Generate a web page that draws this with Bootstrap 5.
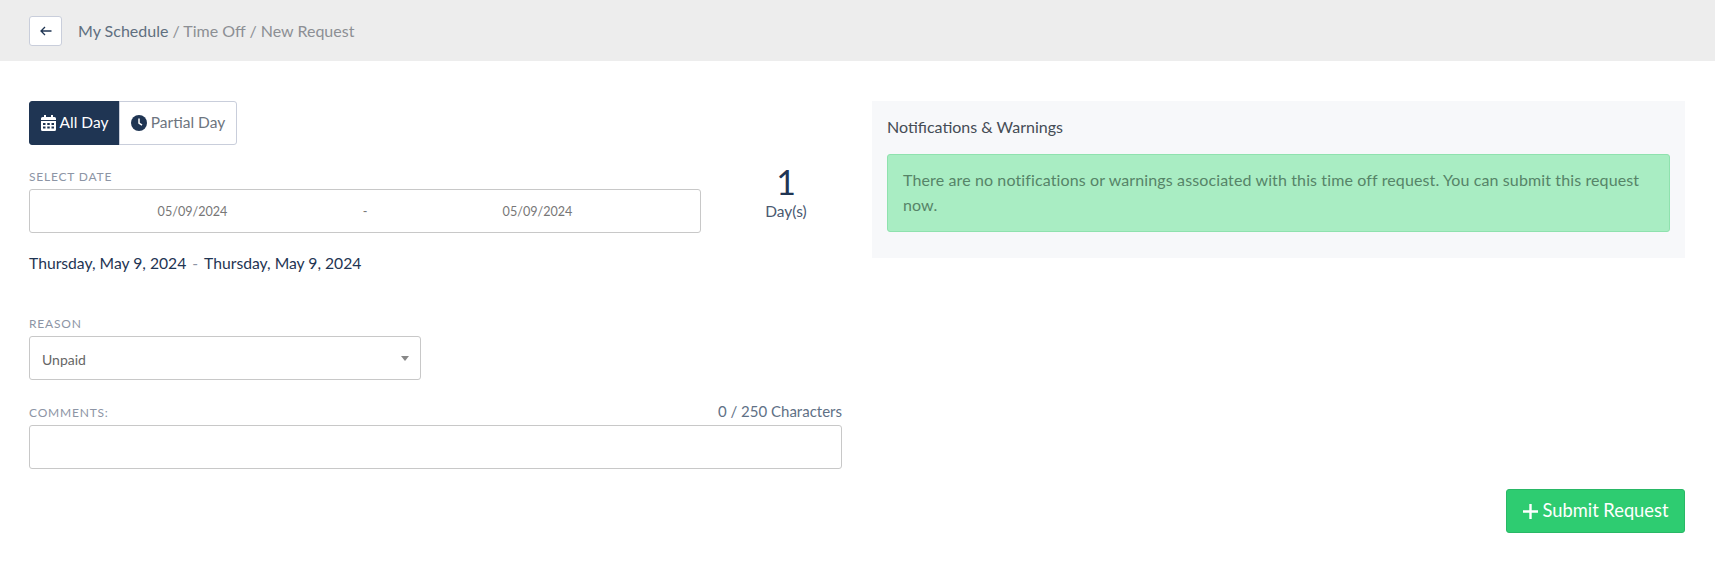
<!DOCTYPE html>
<html lang="en">
<head>
<meta charset="utf-8">
<title>New Request</title>
<link rel="stylesheet" href="https://cdn.jsdelivr.net/npm/bootstrap@5.3.0/dist/css/bootstrap.min.css">
<style>
body{font-family:Lato,"Open Sans",sans-serif;color:#1f3553;background:#fff;overflow:hidden}
.top-strip{height:61px;background:#ededed;padding:0 29px;gap:16px}
.back-btn{width:33px;height:30px;padding:0;background:#fff;border:1px solid #c9cedb;border-radius:3px;display:flex;align-items:center;justify-content:center}
.crumbs{font-size:16px;color:#8c8f94}
.crumbs b{font-weight:400;color:#5f6f80}
.page-body{padding:40px 29px 0;gap:30px}
.left-pane,.right-pane{width:813px;flex:none}
.toggle-group{width:208px;height:44px}
.toggle-group .btn{font-size:15.5px;padding:0;border-color:#c9cedb;display:flex;align-items:center;justify-content:center;gap:4px;border-radius:3px}
.btn-day{width:91px;flex:none!important;background:#1f3553;color:#fff;border-color:#1f3553!important}
.btn-part{background:#fff;color:#6d7580}
.field-cap{font-size:12px;letter-spacing:.8px;color:#8d95a5;line-height:14px;margin-bottom:5px;text-transform:uppercase}
.cap-raised{margin-bottom:1px}
.date-wrap{width:672px;height:44px;border:1px solid #c8c8c8;border-radius:3px;color:#777;font-size:12.6px;padding-top:2px}
.date-wrap span{flex:1;text-align:center}
.date-wrap .sep{flex:none;width:20px}
.day-count{width:112px;margin-left:29px;text-align:center;margin-top:-19px}
.day-num{font-size:34px;line-height:38px}
.day-lbl{font-size:15.5px;line-height:20px;color:#4a5970}
.long-dates{font-size:15.7px;line-height:20px;margin-top:20px;color:#1f3553}
.long-dates i{font-style:normal;color:#8d95a5;padding:0 6px}
.reason-box{width:392px;height:44px;border:1px solid #c8c8c8;border-radius:3px;padding:2px 12px 0;font-size:14px;color:#666;background-position:right 11px center;background-size:8px 5px;background-image:url("data:image/svg+xml,%3Csvg xmlns='http://www.w3.org/2000/svg' viewBox='0 0 8 5'%3E%3Cpath fill='%23888' d='M0 0h8L4 5z'/%3E%3C/svg%3E")}
.comment-box{height:44px;border:1px solid #c8c8c8;border-radius:3px;resize:none}
.char-count{font-size:15px;line-height:20px;color:#5f7186}
.notice-panel{height:157px;background:#f7f8fa;padding:14px 15px}
.notice-title{font-size:16px;line-height:24px;color:#454c55;font-weight:400;margin-bottom:15px}
.notice-ok{height:78px;background:#a9edc3;border:1px solid #8fe2ae;border-radius:3px;padding:12px 15px;font-size:16px;letter-spacing:.12px;line-height:25px;color:#568468;margin:0}
.send-btn{width:179px;height:44px;background:#2ecc71;border:1px solid #29b866;color:#fff;font-size:18.3px;border-radius:3px;padding:0;display:flex;align-items:center;justify-content:center;gap:5px}
.send-btn:hover{background:#2ecc71;color:#fff}
</style>
</head>
<body>
<div class="top-strip d-flex align-items-center">
  <button class="back-btn" type="button" aria-label="Back"><svg width="12" height="10" viewBox="0 0 12 10" fill="none" stroke="#1f3553" stroke-width="1.3"><path d="M11.5 5H1M5 1 1 5l4 4"/></svg></button>
  <div class="crumbs"><b>My Schedule</b> / Time Off / New Request</div>
</div>
<div class="page-body d-flex">
  <div class="left-pane">
    <div class="btn-group toggle-group d-flex" role="group">
      <button class="btn btn-day" type="button"><svg width="15" height="16" viewBox="0 0 15 16" fill="#fff"><path d="M0 6h15v8.500a1.500 1.500 0 0 1-1.500 1.500h-12A1.500 1.500 0 0 1 0 14.500zM1.500 2H3V0h2v2h5V0h2v2h1.500A1.500 1.500 0 0 1 15 3.500V5H0V3.500A1.500 1.500 0 0 1 1.500 2z"/><path fill="#1f3553" d="M2 8h2.500v2H2zm4.250 0h2.500v2h-2.500zm4.250 0H13v2h-2.500zM2 11.500h2.500v2H2zm4.250 0h2.500v2h-2.500zm4.250 0H13v2h-2.500z"/></svg>All Day</button>
      <button class="btn btn-part" type="button"><svg width="16" height="16" viewBox="0 0 16 16"><circle cx="8" cy="8" r="8" fill="#1f3553"/><path d="M8 3.500V8l3 2.200" fill="none" stroke="#fff" stroke-width="1.500"/></svg>Partial Day</button>
    </div>
    <div class="d-flex align-items-center" style="margin-top:25px">
      <div>
        <div class="field-cap">Select Date</div>
        <div class="date-wrap d-flex align-items-center"><span>05/09/2024</span><span class="sep">-</span><span>05/09/2024</span></div>
      </div>
      <div class="day-count"><div class="day-num">1</div><div class="day-lbl">Day(s)</div></div>
    </div>
    <div class="long-dates">Thursday, May 9, 2024<i>-</i>Thursday, May 9, 2024</div>
    <div class="field-cap" style="margin-top:44px">Reason</div>
    <select class="form-select reason-box"><option>Unpaid</option></select>
    <div class="d-flex justify-content-between align-items-end" style="margin-top:21px;margin-bottom:4px">
      <div class="field-cap cap-raised">Comments:</div>
      <div class="char-count">0 / 250 Characters</div>
    </div>
    <textarea class="form-control comment-box" aria-label="Comments"></textarea>
  </div>
  <div class="right-pane d-flex flex-column">
    <div class="notice-panel">
      <div class="notice-title">Notifications &amp; Warnings</div>
      <div class="alert notice-ok" role="alert">There are no notifications or warnings associated with this time off request. You can submit this request now.</div>
    </div>
    <div class="d-flex justify-content-end" style="margin-top:231px">
      <button class="btn send-btn" type="button"><svg width="15" height="15" viewBox="0 0 15 15" stroke="#fff" stroke-width="2.400"><path d="M7.500 0v15M0 7.500h15"/></svg>Submit Request</button>
    </div>
  </div>
</div>
</body>
</html>
